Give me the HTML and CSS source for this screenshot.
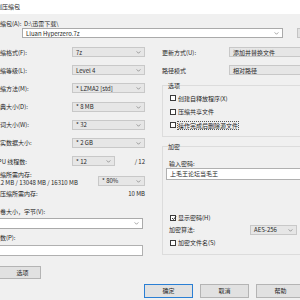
FILE: index.html
```html
<!DOCTYPE html>
<html lang="zh-CN">
<head>
<meta charset="utf-8">
<link rel="stylesheet" href="styles.css">
</head>
<body>
<div class="title">添加到压缩包</div>
<div class="dlg">
  <div class="archive">
    <span class="lbl">压缩包(A):</span>
    <div class="arch-col">
      <div class="path">D:\迅雷下载\</div>
      <div class="combo edit">Lluan Hyperzero.7z<svg class="arrow" viewBox="0 0 6 4"><path d="M0.5 0.5 L3 3 L5.5 0.5"/></svg></div>
    </div>
    <div class="browse">...</div>
  </div>
  <div class="cols">
    <div class="left">
      <div class="row"><span class="lbl">压缩格式(F):</span><div class="combo w73">7z<svg class="arrow" viewBox="0 0 6 4"><path d="M0.5 0.5 L3 3 L5.5 0.5"/></svg></div></div>
      <div class="row"><span class="lbl">压缩等级(L):</span><div class="combo w73">Level 4<svg class="arrow" viewBox="0 0 6 4"><path d="M0.5 0.5 L3 3 L5.5 0.5"/></svg></div></div>
      <div class="row"><span class="lbl">压缩方法(M):</span><div class="combo w73">* LZMA2 [std]<svg class="arrow" viewBox="0 0 6 4"><path d="M0.5 0.5 L3 3 L5.5 0.5"/></svg></div></div>
      <div class="row"><span class="lbl">字典大小(D):</span><div class="combo w73">* 8 MB<svg class="arrow" viewBox="0 0 6 4"><path d="M0.5 0.5 L3 3 L5.5 0.5"/></svg></div></div>
      <div class="row"><span class="lbl">单词大小(W):</span><div class="combo w73">* 32<svg class="arrow" viewBox="0 0 6 4"><path d="M0.5 0.5 L3 3 L5.5 0.5"/></svg></div></div>
      <div class="row"><span class="lbl">固实数据大小:</span><div class="combo w73">* 2 GB<svg class="arrow" viewBox="0 0 6 4"><path d="M0.5 0.5 L3 3 L5.5 0.5"/></svg></div></div>
      <div class="row"><span class="lbl">CPU 线程数:</span><div class="combo w43">* 12<svg class="arrow" viewBox="0 0 6 4"><path d="M0.5 0.5 L3 3 L5.5 0.5"/></svg></div><span class="total">/ 12</span></div>
      <div class="mem">
        <div class="mem-text">
          <div>压缩所需内存:</div>
          <div class="mem-val">712 MB / 13048 MB / 16310 MB</div>
        </div>
        <div class="combo w47">* 80%<svg class="arrow" viewBox="0 0 6 4"><path d="M0.5 0.5 L3 3 L5.5 0.5"/></svg></div>
      </div>
      <div class="demem"><span>解压缩所需内存:</span><span>10 MB</span></div>
      <div class="vol-lbl">分卷大小，字节(V):</div>
      <div class="combo edit full"><span></span><svg class="arrow" viewBox="0 0 6 4"><path d="M0.5 0.5 L3 3 L5.5 0.5"/></svg></div>
      <div class="par-lbl">参数(P):</div>
      <div class="input full"></div>
      <div class="btn opt">选项</div>
    </div>
    <div class="right">
      <div class="rrow"><span class="rlbl">更新方式(U):</span><div class="combo rw">添加并替换文件</div></div>
      <div class="rrow"><span class="rlbl">路径模式</span><div class="combo rw">相对路径</div></div>
      <fieldset class="group opts">
        <legend>选项</legend>
        <div class="cb"><span class="box"></span>创建自释放程序(X)</div>
        <div class="cb"><span class="box"></span>压缩共享文件</div>
        <div class="cb"><span class="box"></span><span class="focus">操作完成后删除源文件</span></div>
      </fieldset>
      <fieldset class="group enc">
        <legend>加密</legend>
        <div class="pw-lbl">输入密码:</div>
        <div class="input pw">上毛王论坛当毛王</div>
        <div class="cb show"><span class="box"><svg viewBox="0 0 6 6"><path d="M1 3 L2.5 4.5 L5 1.5"/></svg></span>显示密码(H)</div>
        <div class="alg"><span>加密算法:</span><div class="combo w47">AES-256<svg class="arrow" viewBox="0 0 6 4"><path d="M0.5 0.5 L3 3 L5.5 0.5"/></svg></div></div>
        <div class="cb names"><span class="box"></span>加密文件名(S)</div>
      </fieldset>
    </div>
  </div>
  <div class="buttons">
    <div class="btn def">确定</div>
    <div class="btn">取消</div>
    <div class="btn">帮助</div>
  </div>
</div>
</body>
</html>
```

FILE: styles.css
```css
* { box-sizing: border-box; }
body {
  margin: 0;
  width: 300px;
  height: 300px;
  overflow: hidden;
  background: #f0f0f0;
  font-family: "Noto Sans CJK SC", "Noto Sans", sans-serif;
  font-size: 6px;
  line-height: 7px;
  color: #262626;
}
.title {
  height: 14px;
  background: #fff;
  line-height: 14px;
  margin-left: -16px;
  white-space: nowrap;
}
.dlg {
  margin-left: -6px;
  width: 330px;
}
.archive {
  display: flex;
  padding-top: 6px;
}
.archive .lbl { width: 28px; white-space: nowrap; }
.arch-col { width: 261px; }
.path { padding-left: 2px; }
.combo {
  position: relative;
  height: 10px;
  border: 1px solid #c8c8c8;
  background: #e6e6e6;
  display: flex;
  align-items: center;
  padding-left: 3px;
  white-space: nowrap;
  overflow: hidden;
}
.combo.edit {
  background: #fff;
  border-color: #aaaaaa;
  margin-top: 1px;
}
.arrow {
  position: absolute;
  right: 3px;
  top: 3px;
  width: 5px;
  height: 3px;
  fill: none;
  stroke: #6a6a6a;
  stroke-width: 0.8;
}
.browse {
  width: 20px;
  height: 10px;
  margin-left: 14px;
  align-self: flex-end;
  border: 1px solid #c4c4c4;
  background: #e1e1e1;
  padding-left: 6px;
  line-height: 6px;
}
.cols {
  display: flex;
  margin-top: 9px;
}
.left {
  width: 151px;
  display: flex;
  flex-direction: column;
}
.row {
  display: flex;
  align-items: center;
  height: 10px;
  margin-bottom: 8.2px;
  white-space: nowrap;
}
.row .lbl { width: 78px; }
.w73 { width: 73px; }
.w43 { width: 43px; }
.w47 { width: 47px; }
.total { margin-left: auto; }
.row:nth-child(7) { margin-bottom: 0; }
.mem {
  display: flex;
  justify-content: space-between;
  margin-top: 5.3px;
  white-space: nowrap;
}
.mem-val { margin-top: 1px; }
.mem .combo { margin-top: 4.5px; }
.demem {
  display: flex;
  justify-content: space-between;
  margin-top: 4px;
}
.vol-lbl { margin-top: 11px; }
.full { width: 149px; }
.combo.full { height: 11px; margin-top: 2.5px; }
.par-lbl { margin-top: 5.5px; }
.input {
  height: 11px;
  background: #fff;
  border: 1px solid #b0b0b0;
  margin-top: 3.5px;
  padding-left: 3px;
  display: flex;
  align-items: center;
  white-space: nowrap;
}
.btn {
  height: 14px;
  width: 49px;
  border: 1px solid #b4b4b4;
  background: #e1e1e1;
  display: flex;
  align-items: center;
  justify-content: center;
}
.btn.opt {
  margin-top: 10px;
  height: 13px;
  width: 47px;
  padding-left: 10px;
}
.btn.def { border-color: #2a7fd4; }
.right {
  margin-left: 17px;
  width: 160px;
}
.rrow {
  display: flex;
  align-items: center;
  height: 10px;
  margin-bottom: 8px;
  white-space: nowrap;
}
.rlbl { width: 67px; }
.rw { width: 93px; }
.group {
  margin: 0;
  border: 1px solid #dcdcdc;
  padding: 2.75px 0 4px 3px;
  min-width: 0;
}
.group legend {
  padding: 0;
  margin-left: 2px;
  line-height: 7px;
}
.opts { margin-top: -1.5px; }
.cb {
  display: flex;
  align-items: center;
  height: 13.5px;
  padding-left: 4px;
  white-space: nowrap;
}
.box {
  width: 6px;
  height: 6px;
  border: 1px solid #3a3a3a;
  background: #fff;
  margin-right: 2px;
  position: relative;
}
.box svg {
  position: absolute;
  left: -0.5px;
  top: -0.5px;
  width: 6px;
  height: 6px;
  fill: none;
  stroke: #222;
  stroke-width: 0.9;
}
.focus { outline: 1px dotted #555; outline-offset: 0; }
.enc {
  margin-top: 6.5px;
  padding-top: 10px;
  padding-bottom: 7.5px;
}
.pw-lbl { margin-left: 3px; }
.input.pw { margin-top: 0.5px; height: 12px; }
.cb.show { margin-top: 34.5px; height: 7px; }
.alg {
  display: flex;
  align-items: center;
  justify-content: space-between;
  height: 10px;
  margin-top: 3.5px;
  padding-left: 3px;
  width: 131px;
}
.cb.names { margin-top: 4.5px; height: 7px; }
.buttons {
  display: flex;
  gap: 7px;
  margin-left: 150px;
  margin-top: 5px;
}
```
